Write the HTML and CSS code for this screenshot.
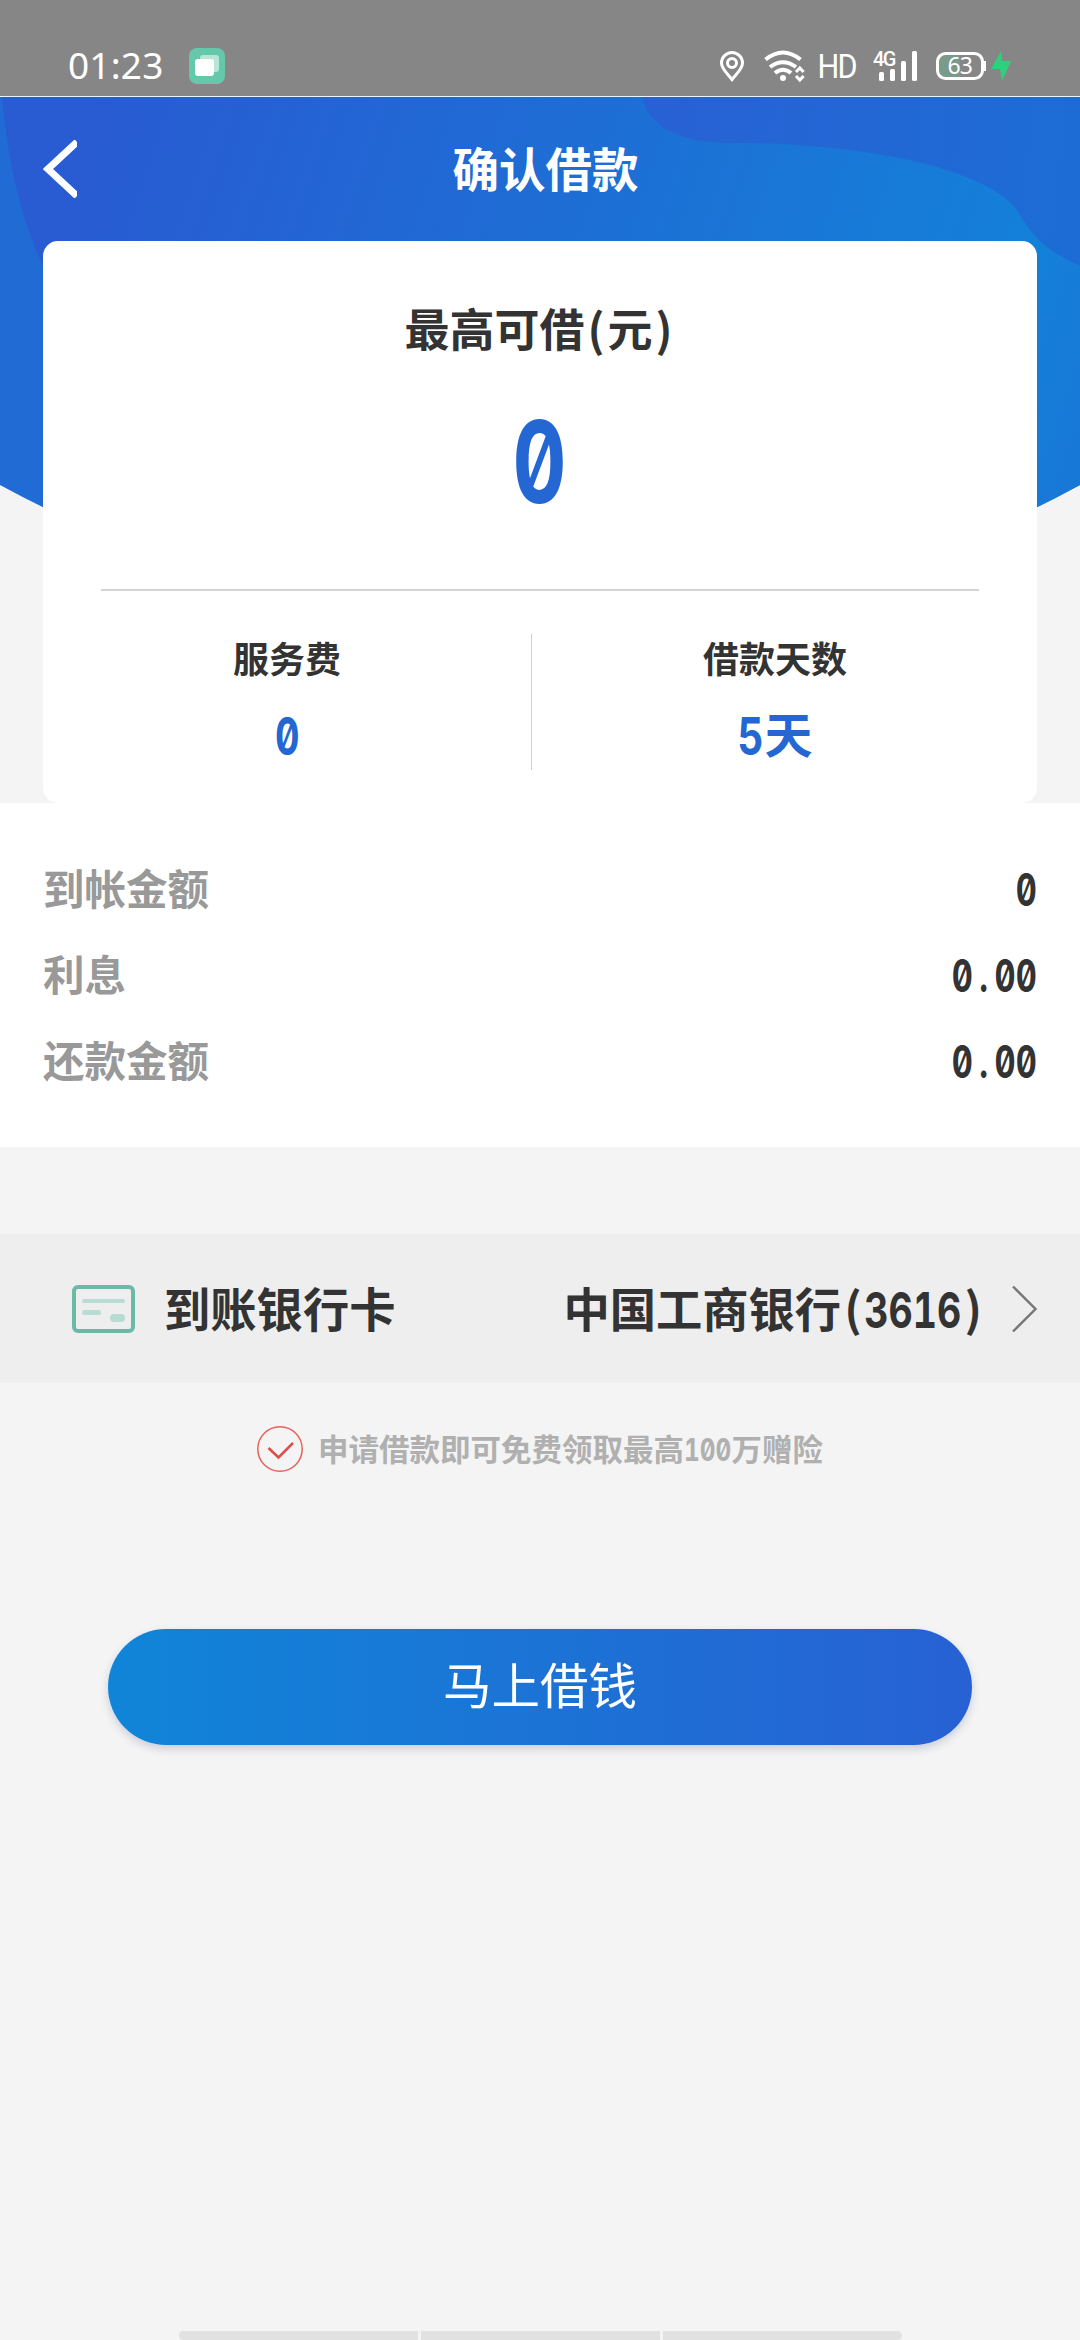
FILE: index.html
```html
<!DOCTYPE html>
<html lang="zh-CN">
<head>
<meta charset="utf-8">
<title>确认借款</title>
<link rel="stylesheet" href="styles.css">
</head>
<body>
<div class="status">
  <span class="clock">01:23</span>
  <svg class="app-icon" width="36" height="36" viewBox="0 0 36 36"><rect width="36" height="36" rx="8" fill="#65c8aa"/><rect x="11" y="7" width="19" height="17" rx="3" fill="#b5e6d8"/><rect x="6" y="11" width="19" height="17" rx="3" fill="#fff"/></svg>
  <svg class="status-icons" width="300" height="40" viewBox="715 46 300 40" fill="none" stroke="#fff">
    <path d="M732 79.500C728 74 721.500 69 721.500 63a10.500 10.500 0 0 1 21 0C742.500 69 736 74 732 79.500Z" stroke-width="3"/>
    <circle cx="732" cy="63" r="4.500" stroke-width="3"/>
    <path d="M765.500 59.500Q783 45.500 800.500 59.500M770 67Q783 57.500 796 67M775 73Q783 66.500 791 73" stroke-width="4"/>
    <circle cx="783" cy="78" r="3" fill="#fff" stroke="none"/>
    <path d="M796 72l3.800-4 3.800 4M796 76l3.800 4 3.800-4" stroke-width="3"/>
    <g fill="#fff" stroke="none">
      <text class="hd" transform="translate(817.500 78) scale(.9 1)">HD</text>
      <text class="net" x="873" y="66">4G</text>
      <rect x="879" y="72" width="5" height="9" rx="1.500"/><rect x="890" y="69" width="5" height="12" rx="1.500"/><rect x="901" y="61" width="5" height="20" rx="1.500"/><rect x="912" y="51" width="5" height="30" rx="1.500"/>
    </g>
    <path d="M945 55h15v22h-15q-6 0-6-6v-10q0-6 6-6Z" fill="#7a9a8c" stroke="none"/>
    <rect x="937.500" y="53.500" width="45" height="25" rx="8" stroke-width="3"/>
    <path d="M984 61v10" stroke-width="4"/>
    <text class="level" x="947.500" y="74" fill="#fff" stroke="none">63</text>
    <path d="M1001 51L991 69h9l2 12 9-20h-9l-1-10Z" fill="#2fd07d" stroke="none"/>
  </svg>
</div>
<main class="page">
  <section class="hero">
    <svg class="hero-bg" width="1080" height="430" viewBox="0 96 1080 430">
      <defs>
        <linearGradient id="wave" gradientUnits="userSpaceOnUse" x1="60" y1="200" x2="1041" y2="534"><stop offset="0" stop-color="#295bd3"/><stop offset=".4" stop-color="#1f6bd4"/><stop offset=".91" stop-color="#1481d9"/><stop offset="1" stop-color="#1878d7"/></linearGradient>
        <linearGradient id="corner" gradientUnits="userSpaceOnUse" x1="640" y1="140" x2="1060" y2="190"><stop offset="0" stop-color="#2861d3"/><stop offset="1" stop-color="#1d6cd5"/></linearGradient>
      </defs>
      <path d="M0 96H1080V484Q830 620 540 620T0 484Z" fill="#206bd4"/>
      <path d="M2 96C8 162 20 215 45 270L540 620Q830 620 1080 484V96Z" fill="url(#wave)"/>
      <path d="M642 96C648 126 680 142 730 142C790 141 870 148 930 164C985 180 1010 196 1020 214C1034 238 1050 252 1080 265V96Z" fill="url(#corner)"/>
    </svg>
    <header class="nav">
      <svg class="back" width="34" height="58" viewBox="0 0 34 58"><path d="M34 2L5 29L34 56" fill="none" stroke="#fff" stroke-width="7"/></svg>
      <h1 class="title">确认借款</h1>
    </header>
    <div class="card">
      <div class="limit-label">最高可借<span class="paren">(</span>元<span class="paren">)</span></div>
      <div class="limit"><span class="num">0</span></div>
      <div class="stats">
        <div class="stat fee"><div class="stat-label">服务费</div><div class="stat-value"><span class="num">0</span></div></div>
        <div class="stat days"><div class="stat-label">借款天数</div><div class="stat-value"><span class="num five">5</span>天</div></div>
      </div>
    </div>
  </section>
  <section class="rows">
    <div class="row"><span class="row-label">到帐金额</span><span class="row-value"><span class="num">0</span></span></div>
    <div class="row"><span class="row-label">利息</span><span class="row-value"><span class="num">0<span class="dot">.</span>00</span></span></div>
    <div class="row"><span class="row-label">还款金额</span><span class="row-value"><span class="num">0<span class="dot">.</span>00</span></span></div>
  </section>
  <section class="bank">
    <svg class="card-icon" width="63" height="48" viewBox="0 0 63 48"><rect x="2" y="2" width="59" height="44" rx="4" fill="none" stroke="#69baa6" stroke-width="4"/><g fill="#b7dcd3"><rect x="10" y="14" width="43" height="4" rx="2"/><rect x="10" y="25" width="19" height="5" rx="2.500"/><rect x="38" y="29" width="15" height="8" rx="4"/></g></svg>
    <span class="bank-label">到账银行卡</span>
    <span class="bank-name">中国工商银行<span class="paren">(</span><span class="num">3616</span><span class="paren">)</span></span>
    <svg class="chevron" width="25" height="48" viewBox="0 0 25 48"><path d="M1 1.500L23.500 24L1 46.500" fill="none" stroke="#777" stroke-width="2.400"/></svg>
  </section>
  <div class="tip">
    <svg width="46" height="46" viewBox="0 0 46 46" fill="none"><circle cx="23" cy="23" r="22.200" stroke="#e8615a" stroke-width="1.500"/><path d="M11.500 22L21.500 31.500L36 17" stroke="#e04c48" stroke-width="2.500"/></svg>
    <span class="tip-text">申请借款即可免费领取最高<span class="num">100</span>万赠险</span>
  </div>
  <button class="submit">马上借钱</button>
</main>
<div class="tabs"><i class="tab"></i><i class="tab"></i><i class="tab"></i></div>
</body>
</html>
```
FILE: styles.css
```css
* { box-sizing: border-box; }
body {
  margin: 0;
  width: 1080px;
  height: 2340px;
  display: flex;
  flex-direction: column;
  overflow: hidden;
  background: #f4f4f4;
  color: #333;
  font-family: "Noto Sans CJK SC", sans-serif;
  font-weight: 700;
}
.status {
  height: 97px;
  flex: none;
  display: flex;
  align-items: flex-start;
  background: #868686;
  border-bottom: 1px solid #e6f7ff;
  color: #fff;
}
.clock {
  width: 121px;
  margin-left: 68px;
  padding-top: 43px;
  font: 400 37px/44px "Noto Sans", sans-serif;
  letter-spacing: .2px;
}
.app-icon { margin-top: 48px; }
.status-icons { margin: 46px 65px 0 auto; }
.hd { font: 400 34px Roboto, sans-serif; letter-spacing: -2px; }
.net { font: 500 20px Roboto, sans-serif; letter-spacing: -1.500px; }
.level { font: 400 23px "Noto Sans", sans-serif; letter-spacing: -1px; }
.page { flex: 1; display: flex; flex-direction: column; }

.hero { position: relative; height: 706px; padding: 0 43px; }
.hero-bg { position: absolute; left: 0; top: 0; z-index: -1; }
.nav { height: 144px; display: flex; align-items: center; }
.back { flex: none; }
.title {
  flex: 1;
  margin: 0 23px 4px 0;
  text-align: center;
  color: #fff;
  font-size: 46.500px;
  line-height: 60px;
}
.card {
  height: 562px;
  padding: 0 58px;
  border-radius: 15px;
  background: #fff;
  text-align: center;
}
.limit-label { padding-top: 54px; font-size: 45px; line-height: 66px; }
.limit {
  height: 228px;
  padding-top: 35px;
  color: #2467d2;
  font-size: 110px;
  line-height: 114px;
}
.stats {
  display: flex;
  padding-top: 43px;
  border-top: 2px solid #d3d3d3;
}
.stat { height: 136px; }
.fee { width: 431px; border-right: 1px solid #cfcfcf; padding-right: 58px; }
.days { flex: 1; padding-left: 39px; }
.stat-label { margin-top: -4px; font-size: 36px; line-height: 54px; }
.stat-value { font-size: 50px; line-height: 60px; margin-top: 18px; color: #2467d2; }
.days .stat-value { font-size: 48px; }

/* condensed half-em digits with a slashed zero */
.num {
  display: inline-block;
  font-family: Inter, sans-serif;
  font-feature-settings: "zero", "tnum";
  transform: scale(.76, 1.04);
}
.dot { display: inline-block; width: .66em; text-align: center; }
.paren { display: inline-block; width: .51em; text-align: center; }
.days .five { margin: 0 -2px 0 -2px; transform: scale(.84, 1.1); }

.rows { height: 344px; padding: 41px 43px 45px; background: #fff; }
.row {
  height: 86px;
  display: flex;
  align-items: center;
  justify-content: space-between;
  line-height: 60px;
}
.row-label { color: #999; font-size: 41.500px; }
.row-value { font-size: 43px; }
.row .num { transform-origin: right; }

.bank {
  height: 149px;
  margin-top: 87px;
  padding: 0 43px 0 72px;
  display: flex;
  align-items: center;
  background: #eee;
  font-size: 46.300px;
}
.bank-label { margin: 0 0 5px 29px; }
.bank-name { margin: 0 0 5px auto; }
.bank .num { margin: 0 -.25em; transform: scale(.81, 1.06); }
.chevron { margin-left: 27px; }

.tip {
  height: 46px;
  margin-top: 43px;
  display: flex;
  align-items: center;
  justify-content: center;
  gap: 15px;
  color: #b0b0b0;
  font-size: 30.500px;
}
.tip-text { margin-bottom: 3px; }
.tip .num { margin: 0 -.19em; transform: scale(.8, 1.04); }

.submit {
  width: 864px;
  height: 116px;
  margin: 157px auto 0;
  padding: 0 0 8px;
  border: 0;
  border-radius: 58px;
  background: linear-gradient(90deg, #1085d8, #2761d3);
  box-shadow: 0 4px 8px rgba(40, 60, 120, .2);
  color: #fff;
  font: 400 48.500px/60px "Noto Sans CJK SC", sans-serif;
}
.tabs {
  height: 9px;
  width: 723px;
  margin: 0 auto;
  display: flex;
  gap: 3px;
  flex: none;
}
.tab { flex: 1; background: #e1e1e1; }
.tab:first-child { border-radius: 7px 0 0 7px; }
.tab:last-child { border-radius: 0 7px 7px 0; }
```
